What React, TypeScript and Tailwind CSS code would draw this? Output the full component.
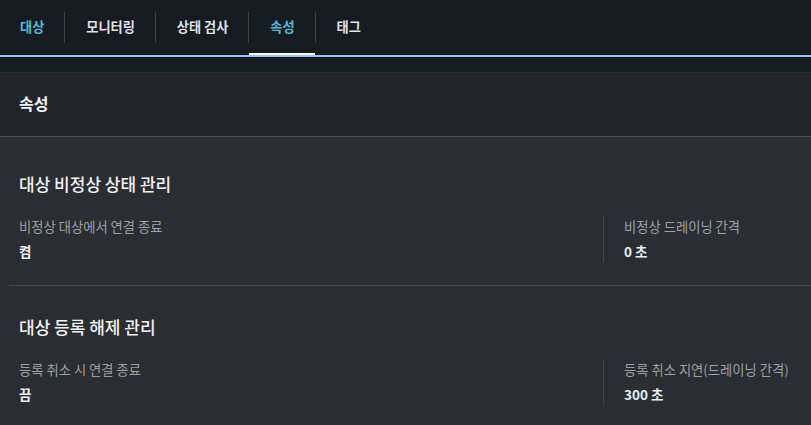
import type { ReactNode } from "react";

const tabs = [
  { label: "대상", active: false, accent: true },
  { label: "모니터링", active: false, accent: false },
  { label: "상태 검사", active: false, accent: false },
  { label: "속성", active: true, accent: true },
  { label: "태그", active: false, accent: false },
];

function Field({ label, value, divided }: { label: string; value: string; divided?: boolean }) {
  return (
    <div className={divided ? "border-l border-[#43464b] pl-5" : ""}>
      <p className="text-[13.3px] leading-[22px] text-[#9ca1a7]">{label}</p>
      <p className="mt-[2px] text-[13.5px] font-semibold leading-[22px] text-[#eef0f2]">{value}</p>
    </div>
  );
}

function Section({ title, top, children }: { title: string; top: string; children: ReactNode }) {
  return (
    <section className={"px-[19px] pb-[23px] " + top}>
      <h3 className="text-[17px] font-medium leading-[28px] text-[#f2f3f5]">{title}</h3>
      <div className="mt-[18px] grid grid-cols-[584px_1fr]">{children}</div>
    </section>
  );
}

export default function App() {
  return (
    <div
      className="h-[425px] w-[811px] overflow-hidden bg-[#161a21]"
      style={{ fontFamily: '"Noto Sans CJK KR", "Noto Sans", sans-serif' }}
    >
      <nav className="flex h-[55px] items-stretch">
        {tabs.map((t, i) => (
          <div key={t.label} className="flex items-stretch">
            {i > 0 && <div className="my-[12px] w-px bg-[#3d4148]" />}
            <div
              className={
                "flex items-center border-b-2 pr-[20px] text-[13.2px] font-bold " +
                (i === 0 ? "pl-[20px] " : "pl-[21px] ") +
                (t.active ? "border-white " : "border-transparent ") +
                (t.accent ? "text-[#5bb8d8]" : "text-[#dfe2e6]")
              }
            >
              {t.label}
            </div>
          </div>
        ))}
      </nav>
      <div className="h-[2px] bg-[#9ac2f5]" />
      <div className="h-[15px]" />
      <div className="border-t border-[#2b2e33] bg-[#22252c]">
        <div className="flex h-[63px] items-center px-[19px] pb-[3px]">
          <h2 className="text-[16px] font-bold text-[#f2f3f5]">속성</h2>
        </div>
      </div>
      <div className="h-full border-t border-[#484b50] bg-[#2a2d32]">
        <Section title="대상 비정상 상태 관리" top="pt-[33px]">
          <Field label="비정상 대상에서 연결 종료" value="켬" />
          <Field label="비정상 드레이닝 간격" value="0 초" divided />
        </Section>
        <div className="ml-[9px] h-px bg-[#46494e]" />
        <Section title="대상 등록 해제 관리" top="pt-[27px]">
          <Field label="등록 취소 시 연결 종료" value="끔" />
          <Field label="등록 취소 지연(드레이닝 간격)" value="300 초" divided />
        </Section>
      </div>
    </div>
  );
}
